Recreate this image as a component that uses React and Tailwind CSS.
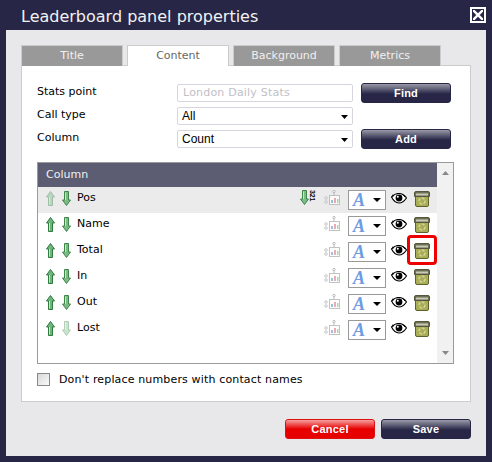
import React from 'react';

const rows = [
  { name: 'Pos', upOff: true, sort: true, shaded: true },
  { name: 'Name' },
  { name: 'Total', marked: true },
  { name: 'In' },
  { name: 'Out' },
  { name: 'Lost', downOff: true },
];

const tabs = ['Title', 'Content', 'Background', 'Metrics'];

const ArrowUp = ({ off }) => (
  <svg width="9" height="15" viewBox="0 0 9 15" className={off ? 'opacity-40' : ''}>
    <path d="M4.5 .5 L8.5 6 H6.5 V14.5 H2.5 V6 H.5 Z" fill="#6fb57c" stroke="#2f7a3e" strokeWidth="1" />
    <path d="M3.5 6 V13.5" stroke="#c8e6cd" strokeWidth="1" />
  </svg>
);

const ArrowDown = ({ off }) => (
  <svg width="9" height="15" viewBox="0 0 9 15" className={off ? 'opacity-40' : ''}>
    <path d="M4.5 14.5 L8.5 9 H6.5 V.5 H2.5 V9 H.5 Z" fill="#7dbb85" stroke="#3d8549" strokeWidth="1" />
    <path d="M3.5 1.5 V9" stroke="#c8e6cd" strokeWidth="1" />
  </svg>
);

const SortIcon = () => (
  <div className="flex w-[15px] h-[16px] items-start">
    <ArrowDown />
    <span className="ml-[1px] text-[7px] leading-[5px] font-bold tracking-[-0.2px] text-black [writing-mode:vertical-rl] font-['Liberation_Sans',sans-serif]">321</span>
  </div>
);

const ChartIcon = () => (
  <svg width="16" height="16" viewBox="0 0 16 16" className="opacity-80">
    <rect x="5.5" y="5.5" width="10" height="9" fill="#fff" stroke="#b5b5b5" />
    <rect x="7" y="10" width="2" height="3" fill="#7fb2e5" />
    <rect x="10" y="8" width="2" height="5" fill="#e59a9a" />
    <rect x="13" y="9" width="1.5" height="4" fill="#9ccb8f" />
    <circle cx="10" cy="1.5" r="1.2" fill="#fff" stroke="#aaa" />
    <path d="M10 3 V5" stroke="#aaa" />
    <circle cx="2" cy="8" r="1.3" fill="#fff" stroke="#bbb" />
    <circle cx="2" cy="12" r="1.3" fill="#fff" stroke="#bbb" />
  </svg>
);

const Caret = ({ size = 'w-[10px] h-[5px]' }) => (
  <svg viewBox="0 0 10 5" className={size} preserveAspectRatio="none">
    <path d="M0 0 H10 L5 5 Z" fill="#000" />
  </svg>
);

const FontBox = () => (
  <div className="flex w-[38px] h-[20px] items-center border border-[#999] bg-white pl-[4px]">
    <span className="w-[15px] text-[18px] leading-[18px] font-bold italic text-[#6f9be3] font-['Liberation_Serif',serif]">A</span>
    <span className="ml-[5px] flex"><Caret size="w-[8px] h-[4px]" /></span>
  </div>
);

const EyeIcon = () => (
  <svg width="16" height="11" viewBox="0 0 16 11">
    <path d="M.5 4 Q4 .3 8 .5 Q12.5 .7 15.5 5 Q12 10 8 10 Q3.5 10 .5 4 Z" fill="#fff" stroke="#000" strokeWidth="1.2" />
    <circle cx="8" cy="5" r="3.4" fill="#000" />
    <circle cx="6.8" cy="3.8" r="1" fill="#fff" />
    <path d="M1 2 L3 3 M12 1.5 L14 4" stroke="#000" />
  </svg>
);

const TrashIcon = () => (
  <svg width="16" height="16" viewBox="0 0 16 16">
    <path d="M1.5 5 H14.5 V14 Q14.5 15.5 13 15.5 H3 Q1.5 15.5 1.5 14 Z" fill="#a9ad55" stroke="#5d6130" />
    <path d="M.5 2 Q.5 .5 2 .5 H14 Q15.5 .5 15.5 2 V5.5 H.5 Z" fill="#6d6f52" stroke="#55563d" />
    <rect x="2" y="2.5" width="12" height="2" fill="#c9c9b8" />
    <circle cx="8" cy="10" r="3" fill="none" stroke="#d3d69a" strokeWidth="1.5" strokeDasharray="3 1.5" />
  </svg>
);

const Btn = ({ children, red }) => (
  <button
    className={`flex w-[90px] h-[20px] items-center justify-center rounded-[3px] border text-[11px] leading-[16px] font-bold text-white pb-[1px] font-['Liberation_Sans',sans-serif] tracking-[0.2px] ${
      red
        ? 'border-[#d11] bg-[linear-gradient(#f6a0a0,#e60000_50%)]'
        : 'border-[#272646] bg-[linear-gradient(#9a9aa8,#272646_55%)]'
    }`}
  >
    {children}
  </button>
);

const Field = ({ children, disabled }) => (
  <div
    className={`flex w-[176px] h-[18px] items-center justify-between self-center rounded-[2px] border border-[#d5d5de] bg-white pl-[4px] pr-[4px] text-[11px] ${
      disabled ? 'text-[#c0c0c8] tracking-[0.2px] pl-[5px]' : 'text-black font-["Liberation_Sans",sans-serif] text-[12px]'
    }`}
  >
    <span>{children}</span>
    {!disabled && <Caret size="w-[7px] h-[4px] mt-[2px]" />}
  </div>
);

const Row = ({ row }) => (
  <div className={`flex h-[26px] items-start pl-[8px] pr-[7px] pt-[3px] ${row.shaded ? 'bg-[#ebebeb]' : 'bg-white'}`}>
    <div className="flex w-[9px] mt-[1px]"><ArrowUp off={row.upOff} /></div>
    <div className="flex ml-[7px] w-[9px] mt-[1px]"><ArrowDown off={row.downOff} /></div>
    <span className="ml-[6px] mt-[1px] text-[11px] leading-[14px] text-black">{row.name}</span>
    <div className="ml-auto flex items-start">
      {row.sort && <div className="mr-[9px]"><SortIcon /></div>}
      <div className="mr-[8px]"><ChartIcon /></div>
      <FontBox />
      <div className="ml-[5px] mt-[3px] flex"><EyeIcon /></div>
      <div className="relative ml-[7px] mt-[1px] flex">
        <TrashIcon />
        {row.marked && (
          <div className="absolute left-[-7px] top-[-8px] w-[30px] h-[30px] rounded-[4px] border-[3px] border-[#ee0000]" />
        )}
      </div>
    </div>
  </div>
);

export default function App() {
  return (
    <div className="w-[492px] h-[462px] flex flex-col bg-[#272646] px-[6px] pb-[6px] overflow-hidden font-['DejaVu_Sans',sans-serif]">
      <div className="flex h-[30px] shrink-0 items-start justify-between">
        <h1 className="ml-[15px] mt-[5px] text-[16px] leading-[24px] text-[#f2f2f2]">Leaderboard panel properties</h1>
        <button className="mt-[7px] flex w-[16px] h-[16px] items-center justify-center border-2 border-white">
          <svg width="10" height="10" viewBox="0 0 10 10">
            <path d="M0 0 L10 10 M10 0 L0 10" stroke="#fff" strokeWidth="2.4" />
          </svg>
        </button>
      </div>

      <div className="flex-1 flex flex-col bg-[#e8e8ea] px-[15px] pt-[15px]">
        <div className="flex gap-[4px] h-[21px] relative z-10">
          {tabs.map((t) => (
            <div
              key={t}
              className={`flex w-[102px] h-[21px] items-center justify-center border border-b-0 border-[#ccc] pt-[1px] text-[11px] ${
                t === 'Content' ? 'bg-white text-[#666]' : 'bg-[#999] text-[#f0f0f0]'
              }`}
            >
              {t}
            </div>
          ))}
        </div>

        <div className="mt-[-1px] h-[337px] flex flex-col border border-[#ccc] bg-white pl-[15px] pr-[16px] pt-[17px]">
          <div className="grid grid-cols-[140px_176px_90px] grid-rows-[20px_20px_20px] gap-y-[3px] text-[11px] text-black">
            <span className="leading-[14px] mt-[2px]">Stats point</span>
            <Field disabled>London Daily Stats</Field>
            <div className="ml-[8px]"><Btn>Find</Btn></div>

            <span className="leading-[14px] mt-[2px]">Call type</span>
            <Field>All</Field>
            <div />

            <span className="leading-[14px] mt-[2px]">Column</span>
            <Field>Count</Field>
            <div className="ml-[8px]"><Btn>Add</Btn></div>
          </div>

          <div className="mt-[13px] flex h-[202px] border border-[#9a9a9a]">
            <div className="flex-1 flex flex-col">
              <div className="flex h-[24px] items-center bg-[#5c5c72] pl-[8px] pt-[1px] text-[11px] text-[#f0f0f0]">Column</div>
              {rows.map((r) => <Row key={r.name} row={r} />)}
            </div>
            <div className="w-[16px] flex flex-col items-center justify-between bg-[#f1f1f1] py-[8px]">
              <svg width="7" height="4" viewBox="0 0 7 4"><path d="M3.5 0 L7 4 H0 Z" fill="#888" /></svg>
              <svg width="7" height="4" viewBox="0 0 7 4"><path d="M0 0 H7 L3.5 4 Z" fill="#888" /></svg>
            </div>
          </div>

          <label className="mt-[9px] flex items-start text-[11px] leading-[14px] text-black tracking-[0.15px]">
            <span className="flex w-[13px] h-[13px] border border-[#888] bg-[linear-gradient(135deg,#d8d8d8,#fafafa)]" />
            <span className="ml-[9px]">Don't replace numbers with contact names</span>
          </label>
        </div>

        <div className="mt-[17px] flex justify-end gap-[6px]">
          <Btn red>Cancel</Btn>
          <Btn>Save</Btn>
        </div>
      </div>
    </div>
  );
}
